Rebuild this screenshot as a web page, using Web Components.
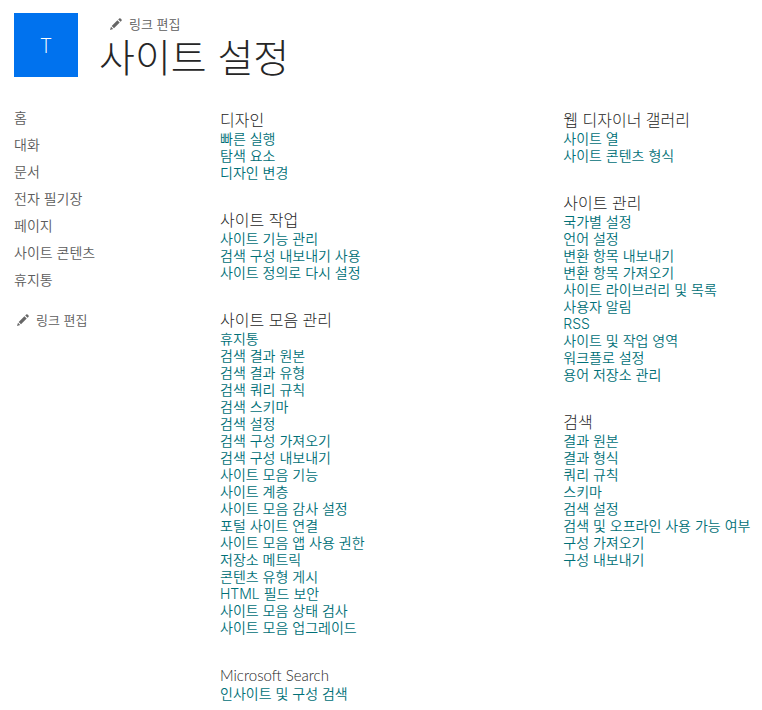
<!DOCTYPE html>
<html lang="ko">
<head>
<meta charset="utf-8">
<meta name="viewport" content="width=device-width, initial-scale=1">
<title>사이트 설정</title>
<style>
  body {
    margin: 0;
    background: #fff;
    color: #262626;
    font-family: Inter, "Noto Sans CJK KR", sans-serif;
    font-weight: 350;
    --link: #007077;
    --muted: #5c5c5c;
    --brand: #0072ee;
  }
</style>
</head>
<body>
<site-page>
  <site-header slot="header" initial="T" heading="사이트 설정"></site-header>
  <site-nav slot="nav" items="홈|대화|문서|전자 필기장|페이지|사이트 콘텐츠|휴지통"></site-nav>
  <settings-column slot="main">
    <settings-group heading="디자인" items="빠른 실행|탐색 요소|디자인 변경"></settings-group>
    <settings-group heading="사이트 작업" items="사이트 기능 관리|검색 구성 내보내기 사용|사이트 정의로 다시 설정"></settings-group>
    <settings-group heading="사이트 모음 관리" items="휴지통|검색 결과 원본|검색 결과 유형|검색 쿼리 규칙|검색 스키마|검색 설정|검색 구성 가져오기|검색 구성 내보내기|사이트 모음 기능|사이트 계층|사이트 모음 감사 설정|포털 사이트 연결|사이트 모음 앱 사용 권한|저장소 메트릭|콘텐츠 유형 게시|HTML 필드 보안|사이트 모음 상태 검사|사이트 모음 업그레이드"></settings-group>
    <settings-group latin heading="Microsoft Search" items="인사이트 및 구성 검색"></settings-group>
  </settings-column>
  <settings-column slot="side">
    <settings-group heading="웹 디자이너 갤러리" items="사이트 열|사이트 콘텐츠 형식"></settings-group>
    <settings-group heading="사이트 관리" items="국가별 설정|언어 설정|변환 항목 내보내기|변환 항목 가져오기|사이트 라이브러리 및 목록|사용자 알림|RSS|사이트 및 작업 영역|워크플로 설정|용어 저장소 관리"></settings-group>
    <settings-group heading="검색" items="결과 원본|결과 형식|쿼리 규칙|스키마|검색 설정|검색 및 오프라인 사용 가능 여부|구성 가져오기|구성 내보내기"></settings-group>
  </settings-column>
</site-page>
<script>
  const mount = (host, html) => {
    host.attachShadow({ mode: "open" }).innerHTML = html;
  };
  const listItems = (host) =>
    (host.getAttribute("items") || "").split("|")
      .map((text) => `<li><a href="#">${text}</a></li>`).join("");

  customElements.define("site-page", class extends HTMLElement {
    constructor() {
      super();
      mount(this, `
        <style>
          :host { display: block; padding: 13px 0 0 14px; }
          .body { display: grid; grid-template-columns: 206px 19fr 11fr; margin-top: 26px; }
        </style>
        <slot name="header"></slot>
        <div class="body">
          <slot name="nav"></slot>
          <slot name="main"></slot>
          <slot name="side"></slot>
        </div>`);
    }
  });

  customElements.define("edit-links", class extends HTMLElement {
    constructor() {
      super();
      mount(this, `
        <style>
          :host { display: block; font-size: 13px; line-height: 20px; }
          a { display: inline-flex; align-items: center; gap: 7px; color: var(--muted); text-decoration: none; white-space: nowrap; }
          svg { width: 12px; height: 12px; fill: #666; }
        </style>
        <a href="#"><svg viewBox="0 0 12 12" aria-hidden="true"><path d="M0 12 1 8.800 3.200 11ZM1.700 8 7.400 2.300 9.700 4.600 4 10.300ZM8.200 1.500 9.200.5Q10-.3 11 .8 12.200 2 11.400 2.900L10.500 3.800Z"/></svg>링크 편집</a>`);
    }
  });

  customElements.define("site-header", class extends HTMLElement {
    connectedCallback() {
      if (this.shadowRoot) return;
      mount(this, `
        <style>
          :host { display: flex; gap: 21px; }
          .logo { display: flex; align-items: center; justify-content: center; width: 64px; height: 64px; background: var(--brand); color: #fff; font-family: "Open Sans", sans-serif; font-size: 20px; font-weight: 350; text-decoration: none; }
          .titles { display: flex; flex-direction: column; gap: 5px; padding-top: 1px; }
          edit-links { margin-left: 11px; }
          h1 { margin: 0; font-family: "Liberation Sans", "Noto Sans CJK KR", sans-serif; font-size: 39px; line-height: 38px; font-weight: 300; }
        </style>
        <a class="logo" href="#">${this.getAttribute("initial")}</a>
        <div class="titles">
          <edit-links></edit-links>
          <h1>${this.getAttribute("heading")}</h1>
        </div>`);
    }
  });

  customElements.define("site-nav", class extends HTMLElement {
    connectedCallback() {
      if (this.shadowRoot) return;
      mount(this, `
        <style>
          :host { display: block; font-size: 14px; line-height: 27px; }
          ul { list-style: none; margin: 0; padding: 0; }
          a { color: var(--muted); text-decoration: none; }
          edit-links { margin: 17px 0 0 3px; }
        </style>
        <nav>
          <ul>${listItems(this)}</ul>
          <edit-links></edit-links>
        </nav>`);
    }
  });

  customElements.define("settings-column", class extends HTMLElement {
    constructor() {
      super();
      mount(this, `
        <style>
          :host { display: flex; flex-direction: column; gap: 29px; min-width: 0; padding-top: 6px; }
        </style>
        <slot></slot>`);
    }
  });

  customElements.define("settings-group", class extends HTMLElement {
    connectedCallback() {
      if (this.shadowRoot) return;
      mount(this, `
        <style>
          :host { display: block; }
          h2 { margin: 0; font-size: 16px; line-height: 20px; font-weight: 300; }
          :host([latin]) h2 { font-family: Lato, sans-serif; font-size: 15px; }
          ul { list-style: none; margin: 0; padding: 0; font-size: 14px; line-height: 17px; }
          li { height: 17px; white-space: nowrap; }
          a { color: var(--link); text-decoration: none; }
        </style>
        <h2>${this.getAttribute("heading")}</h2>
        <ul>${listItems(this)}</ul>`);
    }
  });
</script>
</body>
</html>
